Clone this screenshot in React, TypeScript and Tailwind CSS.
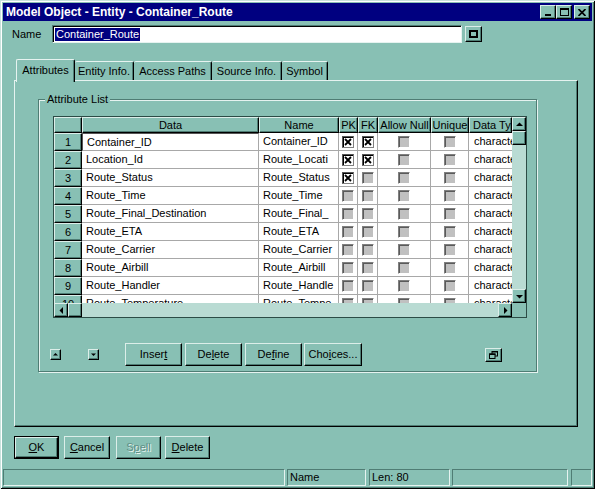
const raised =
  'border border-t-[#dceee9] border-l-[#dceee9] border-r-black border-b-black shadow-[inset_-1px_-1px_0_#4f7d74]'
const sunken =
  'border border-t-[#4f7d74] border-l-[#4f7d74] border-r-[#e6f3f0] border-b-[#e6f3f0] shadow-[inset_1px_1px_0_#000]'
const statusCell = 'border border-t-[#4f7d74] border-l-[#4f7d74] border-r-[#e6f3f0] border-b-[#e6f3f0]'

type Row = { data: string; name: string; pk: boolean; fk: boolean }

const rows: Row[] = [
  { data: 'Container_ID', name: 'Container_ID', pk: true, fk: true },
  { data: 'Location_Id', name: 'Route_Locati', pk: true, fk: true },
  { data: 'Route_Status', name: 'Route_Status', pk: true, fk: false },
  { data: 'Route_Time', name: 'Route_Time', pk: false, fk: false },
  { data: 'Route_Final_Destination', name: 'Route_Final_', pk: false, fk: false },
  { data: 'Route_ETA', name: 'Route_ETA', pk: false, fk: false },
  { data: 'Route_Carrier', name: 'Route_Carrier', pk: false, fk: false },
  { data: 'Route_Airbill', name: 'Route_Airbill', pk: false, fk: false },
  { data: 'Route_Handler', name: 'Route_Handle', pk: false, fk: false },
  { data: 'Route_Temperature', name: 'Route_Tempe', pk: false, fk: false },
]

const headers = [
  { label: 'Data', cls: 'w-[177px] justify-center' },
  { label: 'Name', cls: 'w-[80px] justify-center' },
  { label: 'PK', cls: 'w-[19px] justify-center' },
  { label: 'FK', cls: 'w-[20px] justify-center' },
  { label: 'Allow Null', cls: 'w-[53px] justify-center' },
  { label: 'Unique', cls: 'w-[38px] justify-center' },
  { label: 'Data Type', cls: 'w-[43px] pl-[3px]' },
]

function Arrow({ dir, size = 7 }: { dir: 'up' | 'down' | 'left' | 'right'; size?: number }) {
  const pts = {
    up: '0,5 7,5 3.5,1.5',
    down: '0,2 7,2 3.5,5.5',
    left: '5,0 5,7 1.5,3.5',
    right: '2,0 2,7 5.5,3.5',
  }[dir]
  return (
    <svg width={size} height={size} viewBox="0 0 7 7">
      <polygon points={pts} fill="#000" />
    </svg>
  )
}

function Check({ on }: { on: boolean }) {
  if (on)
    return (
      <div className="flex h-[12px] w-[12px] items-center justify-center border border-t-[#555] border-l-[#555] border-r-[#808080] border-b-[#808080] bg-white shadow-[inset_1px_1px_0_#000]">
        <svg width="8" height="8" viewBox="0 0 8 8">
          <path d="M1 1L7 7M7 1L1 7" stroke="#000" strokeWidth="1.8" />
        </svg>
      </div>
    )
  return (
    <div className="h-[12px] w-[12px] border border-t-[#808080] border-l-[#808080] border-r-white border-b-white bg-[#c0c0c0] shadow-[inset_1px_1px_0_#5a5a5a]" />
  )
}

function Btn({ children, className = '' }: { children: React.ReactNode; className?: string }) {
  return (
    <div className={`flex items-center justify-center bg-[#88c0b4] ${raised} ${className}`}>{children}</div>
  )
}

function Grid() {
  const cell = 'flex h-full items-center border-r border-b border-[#a8a8a8] bg-white overflow-hidden whitespace-nowrap'
  return (
    <div className="flex h-[202px] w-[474px] border border-[#2c4c46]">
      <div className="flex w-[458px] flex-col">
        <div className="flex h-[16px]">
          <div className={`w-[28px] bg-[#88c0b4] ${raised}`} />
          {headers.map((h) => (
            <div
              key={h.label}
              className={`flex items-center overflow-hidden whitespace-nowrap bg-[#88c0b4] ${raised} ${h.cls}`}
            >
              {h.label}
            </div>
          ))}
        </div>
        <div className="h-[170px] overflow-hidden">
          {rows.map((r, i) => (
            <div key={r.data} className="flex h-[18px]">
              <div className={`flex w-[28px] items-center justify-center bg-[#88c0b4] ${raised}`}>{i + 1}</div>
              <div
                className={`${cell} w-[177px] pl-[4px] ${
                  i === 0 ? 'border border-t-[#555] border-l-[#555] border-r-[#a8a8a8] border-b-[#a8a8a8] pl-[3px]' : ''
                }`}
              >
                {r.data}
              </div>
              <div className={`${cell} w-[80px] pl-[4px]`}>{r.name}</div>
              <div className={`${cell} w-[19px] justify-center`}>
                <Check on={r.pk} />
              </div>
              <div className={`${cell} w-[20px] justify-center`}>
                <Check on={r.fk} />
              </div>
              <div className={`${cell} w-[53px] justify-center`}>
                <Check on={false} />
              </div>
              <div className={`${cell} w-[38px] justify-center`}>
                <Check on={false} />
              </div>
              <div className={`${cell} w-[43px] border-r-0 pl-[5px]`}>character</div>
            </div>
          ))}
        </div>
        <div className="flex h-[14px] bg-[#b9dbd3]">
          <Btn className="h-[14px] w-[14px]">
            <Arrow dir="left" />
          </Btn>
          <Btn className="h-[14px] w-[14px]">{null}</Btn>
          <div className="flex-1" />
          <Btn className="h-[14px] w-[14px]">
            <Arrow dir="right" />
          </Btn>
        </div>
      </div>
      <div className="flex w-[14px] flex-col">
        <div className="flex h-[186px] flex-col bg-[#b9dbd3]">
          <Btn className="h-[14px] w-[14px]">
            <Arrow dir="up" />
          </Btn>
          <Btn className="h-[14px] w-[14px]">{null}</Btn>
          <div className="flex-1" />
          <Btn className="h-[14px] w-[14px]">
            <Arrow dir="down" />
          </Btn>
        </div>
        <div className="h-[14px] bg-[#88c0b4]" />
      </div>
    </div>
  )
}

function U({ children }: { children: React.ReactNode }) {
  return <span className="underline underline-offset-[1px]">{children}</span>
}

export default function App() {
  return (
    <div className="flex h-[489px] w-[595px] flex-col bg-[#88c0b4] font-['Liberation_Sans',Arial,sans-serif] text-[11px] leading-none text-black shadow-[inset_1px_1px_0_#c8e2dc,inset_-1px_-1px_0_#000,inset_2px_2px_0_#fff,inset_-2px_-2px_0_#4f7d74]">
      {/* title bar */}
      <div className="mx-[3px] mt-[3px] flex h-[18px] items-center bg-[#000080] pl-[3px] pr-[2px]">
        <span className="text-[12px] font-bold text-white">Model Object - Entity - Container_Route</span>
        <div className="ml-auto flex items-center">
          <Btn className="h-[14px] w-[16px] items-end pb-[2px]">
            <div className="h-[2px] w-[6px] bg-black" />
          </Btn>
          <Btn className="h-[14px] w-[16px]">
            <div className="h-[8px] w-[9px] border border-t-2 border-black" />
          </Btn>
          <Btn className="ml-[2px] h-[14px] w-[16px]">
            <svg width="8" height="7" viewBox="0 0 8 7">
              <path d="M0.5 0L7.5 7M7.5 0L0.5 7" stroke="#000" strokeWidth="1.7" />
            </svg>
          </Btn>
        </div>
      </div>

      {/* name row */}
      <div className="mt-[4px] flex h-[18px] items-center">
        <span className="ml-[12px] w-[40px]">Name</span>
        <div className={`flex h-[18px] w-[410px] items-center bg-white pl-[2px] ${sunken}`}>
          <span className="bg-[#000080] px-[1px] py-[1px] text-white">Container_Route</span>
        </div>
        <Btn className="ml-[3px] h-[16px] w-[17px]">
          <div className="h-[8px] w-[9px] border-2 border-black" />
        </Btn>
      </div>

      {/* tabs */}
      <div className="relative z-10 ml-[16px] mt-[16px] flex h-[21px]">
        <div className="flex h-[23px] w-[59px] items-center justify-center rounded-t-[2px] border-l border-t border-r border-l-[#e6f3f0] border-t-[#e6f3f0] border-r-black bg-[#88c0b4] pb-[2px] shadow-[inset_-1px_0_0_#4f7d74]">
          Attributes
        </div>
        {[
          ['Entity Info.', 'w-[59px]'],
          ['Access Paths', 'w-[78px]'],
          ['Source Info.', 'w-[70px]'],
          ['Symbol', 'w-[46px]'],
        ].map(([t, w]) => (
          <div
            key={t}
            className={`mt-[2px] flex h-[19px] items-center justify-center rounded-t-[2px] border-t border-r border-t-[#e6f3f0] border-r-black shadow-[inset_-1px_0_0_#4f7d74] ${w}`}
          >
            {t}
          </div>
        ))}
      </div>

      {/* tab panel */}
      <div className="ml-[14px] h-[347px] w-[564px] border border-t-[#e6f3f0] border-l-[#e6f3f0] border-r-black border-b-black pl-[23px] pt-[18px] shadow-[inset_-1px_-1px_0_#4f7d74]">
        <div className="relative flex h-[273px] w-[499px] flex-col border border-[#4f7d74] shadow-[1px_1px_0_#e6f3f0,inset_1px_1px_0_#e6f3f0]">
          <span className="absolute left-[6px] top-[-6px] bg-[#88c0b4] px-[2px]">Attribute List</span>
          <div className="ml-[14px] mt-[16px]">
            <Grid />
          </div>
          <div className="ml-[11px] mt-[25px] flex h-[23px] items-center">
            <Btn className="h-[11px] w-[11px]">
              <Arrow dir="up" size={5} />
            </Btn>
            <Btn className="ml-[27px] h-[11px] w-[11px]">
              <Arrow dir="down" size={5} />
            </Btn>
            <Btn className="ml-[26px] h-[23px] w-[57px]">
              Inser<U>t</U>
            </Btn>
            <Btn className="ml-[3px] h-[23px] w-[57px]">
              De<U>l</U>ete
            </Btn>
            <Btn className="ml-[3px] h-[23px] w-[57px]">
              De<U>f</U>ine
            </Btn>
            <Btn className="ml-[2px] h-[23px] w-[58px]">
              Cho<U>i</U>ces...
            </Btn>
            <Btn className="ml-[123px] h-[14px] w-[17px]">
              <svg width="9" height="8" viewBox="0 0 9 8">
                <rect x="3" y="0.5" width="5.5" height="4.5" fill="none" stroke="#000" />
                <rect x="3" y="0" width="6" height="1.5" fill="#000" />
                <rect x="0.5" y="3" width="5.5" height="4.5" fill="#88c0b4" stroke="#000" />
                <rect x="0" y="2.5" width="6.5" height="1.5" fill="#000" />
              </svg>
            </Btn>
          </div>
        </div>
      </div>

      {/* dialog buttons */}
      <div className="ml-[14px] mt-[9px] flex h-[23px]">
        <div className="h-[23px] w-[45px] border border-black">
          <Btn className="h-full w-full">
            <U>O</U>K
          </Btn>
        </div>
        <Btn className="ml-[5px] h-[23px] w-[46px]">
          <U>C</U>ancel
        </Btn>
        <Btn className="ml-[6px] h-[23px] w-[45px] text-[#5f8f85] [text-shadow:1px_1px_0_#e6f3f0]">
          S<U>p</U>ell
        </Btn>
        <Btn className="ml-[4px] h-[23px] w-[45px]">
          <U>D</U>elete
        </Btn>
      </div>

      {/* status bar */}
      <div className="mb-[3px] ml-[3px] mt-auto flex h-[17px]">
        <div className={`w-[282px] ${statusCell}`} />
        <div className={`ml-[2px] flex w-[79px] items-center pl-[2px] ${statusCell}`}>Name</div>
        <div className={`ml-[3px] flex w-[81px] items-center pl-[2px] ${statusCell}`}>Len: 80</div>
        <div className={`ml-[2px] w-[116px] ${statusCell}`} />
        <div className={`ml-[3px] w-[21px] ${statusCell}`} />
      </div>
    </div>
  )
}
